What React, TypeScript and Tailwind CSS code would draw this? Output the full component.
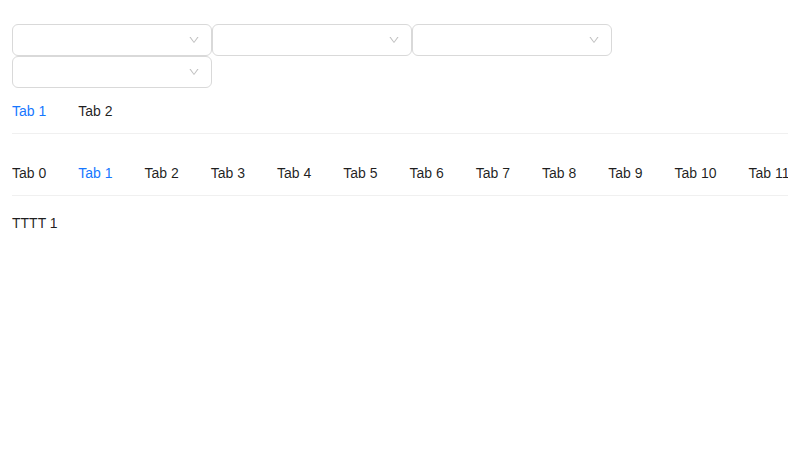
import { useState } from 'react';

const FONT = 'font-["Liberation_Sans",Arial,sans-serif]';

function Chevron() {
  return (
    <svg viewBox="0 0 1024 1024" className="w-3 h-3" fill="currentColor">
      <path d="M884 256h-75c-5.1 0-9.9 2.5-12.9 6.6L512 654.2 227.9 262.6c-3-4.1-7.8-6.6-12.9-6.6h-75c-6.5 0-10.3 7.4-6.5 12.7l352.6 486.1c12.8 17.6 39 17.6 51.7 0l352.6-486.1c3.9-5.3.1-12.7-6.4-12.7z" />
    </svg>
  );
}

function Select() {
  return (
    <div className="w-[200px] h-8 rounded-[6px] border border-[#d9d9d9] bg-white flex items-center justify-end pr-[11px] text-black/25">
      <Chevron />
    </div>
  );
}

function Tabs({
  labels,
  active,
  onChange,
}: {
  labels: string[];
  active: number;
  onChange: (i: number) => void;
}) {
  return (
    <div className="flex border-b border-[#f0f0f0] overflow-hidden mb-4">
      <div className="flex gap-8 shrink-0">
        {labels.map((l, i) => (
          <button
            key={l}
            onClick={() => onChange(i)}
            className={`pt-3 pb-[11px] leading-[22px] text-sm whitespace-nowrap ${
              i === active ? 'text-[#1677ff]' : 'text-black/[0.88]'
            }`}
          >
            {l}
          </button>
        ))}
      </div>
    </div>
  );
}

export default function App() {
  const [a, setA] = useState(0);
  const [b, setB] = useState(1);
  const many = Array.from({ length: 12 }, (_, i) => `Tab ${i}`);

  return (
    <div className={`${FONT} px-3 pt-6 text-sm text-black/[0.88] bg-white min-h-[474px]`}>
      <div className="flex flex-wrap">
        <Select />
        <Select />
        <Select />
        <Select />
      </div>

      <Tabs labels={['Tab 1', 'Tab 2']} active={a} onChange={setA} />
      <Tabs labels={many} active={b} onChange={setB} />

      <div className="leading-[22px]">TTTT {b}</div>
    </div>
  );
}
